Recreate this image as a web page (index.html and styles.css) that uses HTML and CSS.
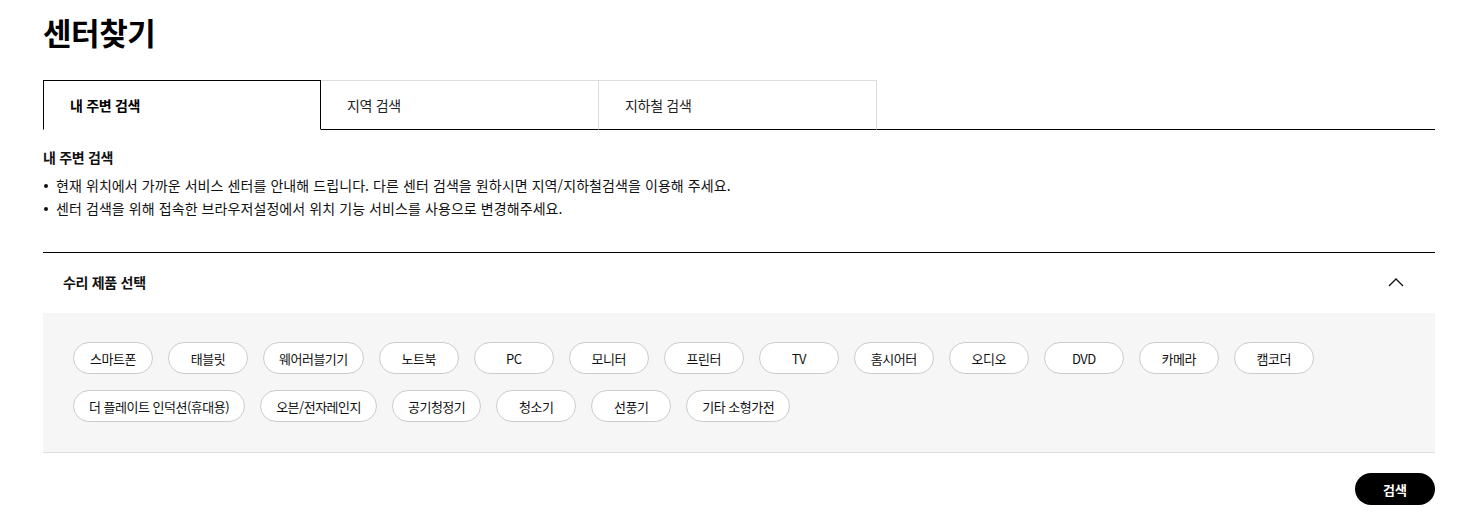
FILE: index.html
```html
<!DOCTYPE html>
<html lang="ko">
<head>
<meta charset="utf-8">
<title>센터찾기</title>
<link rel="stylesheet" href="styles.css">
</head>
<body>
<div class="page">
  <h1 class="title">센터찾기</h1>
  <ul class="tabs">
    <li class="tab active">내 주변 검색</li>
    <li class="tab">지역 검색</li>
    <li class="tab">지하철 검색</li>
  </ul>
  <section class="info">
    <h2 class="info-title">내 주변 검색</h2>
    <ul class="bullets">
      <li>현재 위치에서 가까운 서비스 센터를 안내해 드립니다. 다른 센터 검색을 원하시면 지역/지하철검색을 이용해 주세요.</li>
      <li>센터 검색을 위해 접속한 브라우저설정에서 위치 기능 서비스를 사용으로 변경해주세요.</li>
    </ul>
  </section>
  <section class="accordion">
    <div class="acc-head">
      <span class="acc-title">수리 제품 선택</span>
      <svg class="chev" width="16" height="9" viewBox="0 0 16 9"><path d="M1 8 L8 1 L15 8" fill="none" stroke="#111" stroke-width="1.3"/></svg>
    </div>
    <div class="acc-body">
      <div class="chips">
        <button class="chip">스마트폰</button>
        <button class="chip">태블릿</button>
        <button class="chip">웨어러블기기</button>
        <button class="chip">노트북</button>
        <button class="chip">PC</button>
        <button class="chip">모니터</button>
        <button class="chip">프린터</button>
        <button class="chip">TV</button>
        <button class="chip">홈시어터</button>
        <button class="chip">오디오</button>
        <button class="chip">DVD</button>
        <button class="chip">카메라</button>
        <button class="chip">캠코더</button>
      </div>
      <div class="chips">
        <button class="chip">더 플레이트 인덕션(휴대용)</button>
        <button class="chip">오븐/전자레인지</button>
        <button class="chip">공기청정기</button>
        <button class="chip">청소기</button>
        <button class="chip">선풍기</button>
        <button class="chip">기타 소형가전</button>
      </div>
    </div>
  </section>
  <div class="actions">
    <button class="btn-search">검색</button>
  </div>
</div>
</body>
</html>
```
FILE: styles.css
```css
* { box-sizing: border-box; }
html, body { margin: 0; padding: 0; background: #fff; }
body {
  font-family: "Noto Sans CJK KR", "Noto Sans", "Liberation Sans", sans-serif;
  color: #111;
}
.page {
  padding: 0 30px 0 43px;
}
.title {
  margin: 0;
  padding-top: 11px;
  font-size: 31px;
  line-height: 42px;
  font-weight: 700;
  letter-spacing: -0.4px;
  color: #000;
}
.tabs {
  list-style: none;
  margin: 27px 0 0;
  padding: 0;
  display: flex;
  border-bottom: 1px solid #000;
}
.tab {
  width: 278px;
  height: 50px;
  margin-bottom: -1px;
  padding-left: 26px;
  display: flex;
  align-items: center;
  font-size: 14px;
  color: #222;
  border-top: 1px solid #ddd;
  border-right: 1px solid #ddd;
  border-bottom: 1px solid #000;
  letter-spacing: -0.3px;
}
.tab.active {
  border: 1px solid #000;
  border-bottom-color: #fff;
  font-weight: 700;
  color: #000;
}
.info { padding-top: 16px; }
.info-title {
  margin: 0;
  font-size: 14px;
  line-height: 22px;
  font-weight: 700;
  letter-spacing: -0.3px;
}
.bullets {
  list-style: none;
  margin: 6px 0 0;
  padding: 0;
}
.bullets li {
  position: relative;
  padding-left: 13px;
  font-size: 14px;
  line-height: 23px;
  letter-spacing: 0.08px;
}
.bullets li::before {
  content: "";
  position: absolute;
  left: 1px;
  top: 10px;
  width: 4px;
  height: 4px;
  border-radius: 50%;
  background: #111;
}
.accordion {
  margin-top: 32px;
  border-top: 1px solid #000;
}
.acc-head {
  height: 60px;
  padding: 0 31px 3px 20px;
  display: flex;
  align-items: center;
  justify-content: space-between;
}
.acc-title {
  font-size: 14px;
  font-weight: 700;
  letter-spacing: -0.3px;
}
.chev { display: block; margin-top: 1px; }
.acc-body {
  background: #f6f6f6;
  border-bottom: 1px solid #ddd;
  padding: 29px 30px 30px;
  display: flex;
  flex-direction: column;
  gap: 16px;
}
.chips {
  display: flex;
  gap: 15px;
}
.chip {
  min-width: 80px;
  height: 32px;
  margin: 0;
  padding: 0 15px;
  border: 1px solid #ccc;
  border-radius: 16px;
  background: #fff;
  font-family: inherit;
  font-size: 13px;
  color: #111;
  letter-spacing: -0.5px;
  white-space: nowrap;
  cursor: pointer;
}
.actions {
  display: flex;
  justify-content: flex-end;
  padding-top: 20px;
}
.btn-search {
  width: 80px;
  height: 32px;
  border: 0;
  border-radius: 16px;
  background: #000;
  color: #fff;
  font-family: inherit;
  font-size: 13px;
  font-weight: 700;
}
```
